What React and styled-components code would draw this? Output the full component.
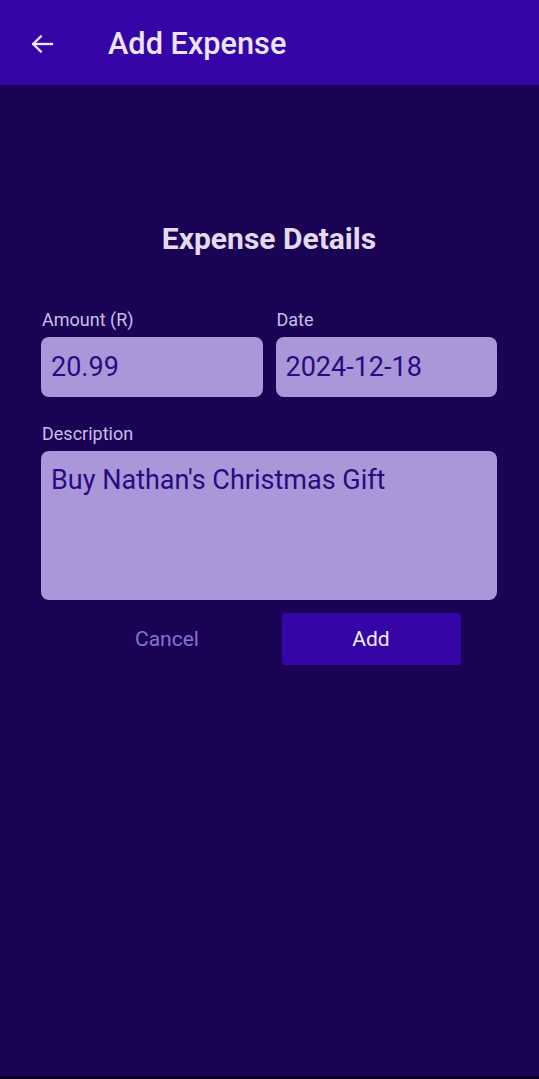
import React from 'react';
import styled, { createGlobalStyle } from 'styled-components';

const GlobalStyle = createGlobalStyle`
  html, body {
    margin: 0;
    padding: 0;
    background: #1a0354;
    font-family: Roboto, "Noto Sans", sans-serif;
  }
`;

const Screen = styled.div`
  width: 539px;
  height: 1079px;
  background: #1a0354;
  display: flex;
  flex-direction: column;
  box-sizing: border-box;
  border-bottom: 3px solid #05001a;
`;

const Header = styled.header`
  height: 85px;
  background: #3605a8;
  display: flex;
  align-items: center;
  padding: 3px 0 0 27px;
  box-sizing: border-box;
`;

const BackButton = styled.button`
  background: none;
  border: none;
  padding: 0;
  width: 30px;
  height: 30px;
  display: flex;
  align-items: center;
  justify-content: center;
  color: #ece4f8;
  margin-right: 51px;
`;

const HeaderTitle = styled.h1`
  margin: 0;
  font-size: 30.7px;
  font-weight: 500;
  color: #ece4f8;
  line-height: 36px;
`;

const Content = styled.main`
  display: flex;
  flex-direction: column;
  padding: 135px 42px 0 41px;
`;

const SectionTitle = styled.h2`
  margin: 0 0 51px;
  text-align: center;
  font-size: 30px;
  font-weight: 700;
  color: #e2dbef;
  line-height: 38px;
`;

const Row = styled.div`
  display: grid;
  grid-template-columns: 1fr 1fr;
  gap: 13px;
`;

const Field = styled.div`
  display: flex;
  flex-direction: column;
  margin-bottom: ${({ $mb }) => $mb || 0}px;
`;

const Label = styled.label`
  font-size: 18px;
  color: #cdbdec;
  line-height: 22px;
  margin-bottom: 6px;
  padding-left: 1px;
`;

const Box = styled.div`
  background: #aa97d9;
  border-radius: 8px;
  height: ${({ $h }) => $h}px;
  box-sizing: border-box;
  padding: ${({ $multi }) => ($multi ? '13px 10px' : '0 10px')};
  display: flex;
  align-items: ${({ $multi }) => ($multi ? 'flex-start' : 'center')};
  font-size: 27px;
  color: #2b0a80;
  line-height: 32px;
`;

const Actions = styled.div`
  display: flex;
  justify-content: center;
  gap: 25px;
  margin-top: 13px;
`;

const ActionButton = styled.button`
  width: 179px;
  height: 52px;
  border: none;
  border-radius: 4px;
  font-family: Roboto, "Noto Sans", sans-serif;
  font-size: 21px;
  padding: 0;
  background: ${({ $primary }) => ($primary ? '#3605a8' : 'transparent')};
  color: ${({ $primary }) => ($primary ? '#f2ecfb' : '#8b70d3')};
`;

const ArrowIcon = () => (
  <svg width="28" height="28" viewBox="0 0 24 24" fill="none" stroke="currentColor" strokeWidth="2" strokeLinecap="square">
    <path d="M20.5 12H4.5" />
    <path d="M11 5.5L4.5 12L11 18.5" />
  </svg>
);

export default function App() {
  return (
    <>
      <GlobalStyle />
      <Screen>
        <Header>
          <BackButton aria-label="Back">
            <ArrowIcon />
          </BackButton>
          <HeaderTitle>Add Expense</HeaderTitle>
        </Header>
        <Content>
          <SectionTitle>Expense Details</SectionTitle>
          <Row>
            <Field $mb={26}>
              <Label>Amount (R)</Label>
              <Box $h={60}>20.99</Box>
            </Field>
            <Field $mb={26}>
              <Label>Date</Label>
              <Box $h={60}>2024-12-18</Box>
            </Field>
          </Row>
          <Field>
            <Label>Description</Label>
            <Box $h={149} $multi>Buy Nathan's Christmas Gift</Box>
          </Field>
          <Actions>
            <ActionButton>Cancel</ActionButton>
            <ActionButton $primary>Add</ActionButton>
          </Actions>
        </Content>
      </Screen>
    </>
  );
}
